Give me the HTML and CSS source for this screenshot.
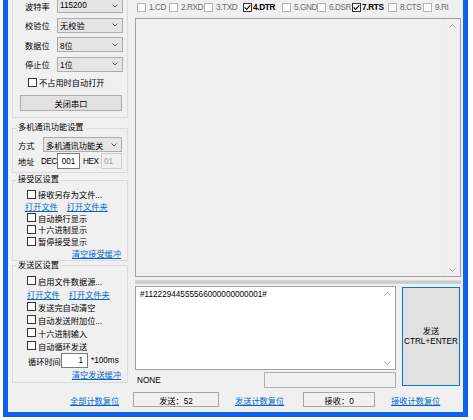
FILE: index.html
```html
<!DOCTYPE html>
<html>
<head>
<meta charset="utf-8">
<title>串口调试</title>
<link rel="stylesheet" href="styles.css">
</head>
<body>
<div class="window">
  <div class="left">
    <div class="grp serial">
      <div class="frow"><span class="flab">波特率</span><div class="combo">115200<svg class="chev" width="6" height="4" viewBox="0 0 6 4"><path d="M0.5 0.5 L3 3 L5.5 0.5"/></svg></div></div>
      <div class="frow"><span class="flab">校验位</span><div class="combo">无校验<svg class="chev" width="6" height="4" viewBox="0 0 6 4"><path d="M0.5 0.5 L3 3 L5.5 0.5"/></svg></div></div>
      <div class="frow"><span class="flab">数据位</span><div class="combo">8位<svg class="chev" width="6" height="4" viewBox="0 0 6 4"><path d="M0.5 0.5 L3 3 L5.5 0.5"/></svg></div></div>
      <div class="frow"><span class="flab">停止位</span><div class="combo">1位<svg class="chev" width="6" height="4" viewBox="0 0 6 4"><path d="M0.5 0.5 L3 3 L5.5 0.5"/></svg></div></div>
      <div class="crow opt"><span class="cb"></span>不占用时自动打开</div>
      <div class="btn close">关闭串口</div>
    </div>

    <fieldset class="grp multi">
      <legend>多机通讯功能设置</legend>
      <div class="mrow"><span class="mlab">方式</span><div class="combo mode">多机通讯功能关<svg class="chev" width="6" height="4" viewBox="0 0 6 4"><path d="M0.5 0.5 L3 3 L5.5 0.5"/></svg></div></div>
      <div class="mrow addr"><span class="alab">地址</span><span class="dec">DEC</span><span class="tbox decin">001</span><span class="hex">HEX</span><span class="tbox hexin">01</span></div>
    </fieldset>

    <fieldset class="grp recv">
      <legend>接受区设置</legend>
      <div class="crow"><span class="cb"></span>接收另存为文件...</div>
      <div class="lrow"><a>打开文件</a><a>打开文件夹</a></div>
      <div class="crow"><span class="cb"></span>自动换行显示</div>
      <div class="crow"><span class="cb"></span>十六进制显示</div>
      <div class="crow"><span class="cb"></span>暂停接受显示</div>
      <div class="rlink"><a>清空接受缓冲</a></div>
    </fieldset>

    <fieldset class="grp send">
      <legend>发送区设置</legend>
      <div class="crow"><span class="cb"></span>启用文件数据源...</div>
      <div class="lrow"><a>打开文件</a><a>打开文件夹</a></div>
      <div class="crow"><span class="cb"></span>发送完自动清空</div>
      <div class="crow"><span class="cb"></span>自动发送附加位...</div>
      <div class="crow"><span class="cb"></span>十六进制输入</div>
      <div class="crow"><span class="cb"></span>自动循环发送</div>
      <div class="looprow"><span class="llab">循环时间</span><span class="tbox loopin">1</span><span class="unit">*100ms</span></div>
      <div class="rlink"><a>清空发送缓冲</a></div>
    </fieldset>

    <div class="resetall"><a>全部计数复位</a></div>
  </div>

  <div class="right">
    <div class="pins">
      <div class="pin off"><span class="cb"></span>1.CD</div>
      <div class="pin off"><span class="cb"></span>2.RXD</div>
      <div class="pin off"><span class="cb"></span>3.TXD</div>
      <div class="pin on"><span class="cb"><svg width="9" height="9" viewBox="0 0 9 9"><path d="M1.6 4.4 L3.6 6.4 L7.4 2.3"/></svg></span>4.DTR</div>
      <div class="pin off"><span class="cb"></span>5.GND</div>
      <div class="pin off"><span class="cb"></span>6.DSR</div>
      <div class="pin on"><span class="cb"><svg width="9" height="9" viewBox="0 0 9 9"><path d="M1.6 4.4 L3.6 6.4 L7.4 2.3"/></svg></span>7.RTS</div>
      <div class="pin off"><span class="cb"></span>8.CTS</div>
      <div class="pin off"><span class="cb"></span>9.RI</div>
    </div>

    <div class="recvbox">
      <div class="vscroll">
        <svg width="7" height="4" viewBox="0 0 7 4"><path d="M0.5 3.5 L3.5 0.5 L6.5 3.5"/></svg>
        <svg width="7" height="4" viewBox="0 0 7 4"><path d="M0.5 0.5 L3.5 3.5 L6.5 0.5"/></svg>
      </div>
    </div>

    <div class="hsplit"></div>

    <div class="sendarea">
      <div class="sendcol">
        <div class="sendbox">
          <div class="sendtext">#11222944555566000000000001#</div>
          <div class="vscroll">
            <svg width="7" height="4" viewBox="0 0 7 4"><path d="M0.5 3.5 L3.5 0.5 L6.5 3.5"/></svg>
            <svg width="7" height="4" viewBox="0 0 7 4"><path d="M0.5 0.5 L3.5 3.5 L6.5 0.5"/></svg>
          </div>
        </div>
        <div class="status"><span>NONE</span><span class="stbox"></span></div>
      </div>
      <div class="sendbtn"><span>发送</span><span>CTRL+ENTER</span></div>
    </div>

    <div class="counts">
      <span class="cbox sent">发送：52</span>
      <a class="clink">发送计数复位</a>
      <span class="cbox recvd">接收：0</span>
      <a class="clink">接收计数复位</a>
    </div>
  </div>
</div>
</body>
</html>
```

FILE: styles.css
```css
* { box-sizing: border-box; }

body {
  margin: 0;
  background: #ffffff;
  font-family: "Liberation Sans", "Noto Sans CJK SC", sans-serif;
  font-size: 8.2px;
  color: #000;
  overflow: hidden;
}

a {
  color: #0066cc;
  text-decoration: underline;
  white-space: nowrap;
}

.window {
  margin-left: 3px;
  width: 465px;
  height: 417px;
  border-left: 5px solid #0a64f0;
  border-right: 5px solid #0a64f0;
  border-bottom: 5px solid #0a64f0;
  background: #f0f0f0;
  display: flex;
  overflow: hidden;
}

/* ---------- left column ---------- */
.left {
  width: 125px;
  flex: none;
  padding-left: 4px;
  display: flex;
  flex-direction: column;
}

.grp {
  width: 116px;
  border: 1px solid #dcdcdc;
  margin: 0;
  min-width: 0;
}

fieldset.grp {
  padding: 0 0 0 3px;
}

legend {
  padding: 0 2px;
  line-height: 10px;
  font-size: 8.2px;
}

.serial {
  border-top: none;
  margin-top: -8px;
  padding-top: 6px;
  padding-bottom: 6px;
}

.frow {
  display: flex;
  align-items: center;
  height: 15px;
  padding-left: 12px;
  margin-bottom: 4.5px;
}

.flab { width: 32px; flex: none; }

.combo {
  width: 66px;
  height: 15px;
  flex: none;
  border: 1px solid #adadad;
  background: #e5e5e5;
  display: flex;
  align-items: center;
  padding-left: 2px;
  white-space: nowrap;
}

.chev {
  margin-left: auto;
  margin-right: 4px;
  flex: none;
}
.chev path { fill: none; stroke: #606060; stroke-width: 1; }

.cb {
  width: 9px;
  height: 9px;
  flex: none;
  border: 1px solid #333333;
  background: #ffffff;
  margin-right: 2px;
  display: inline-flex;
  align-items: center;
  justify-content: center;
}
.cb svg { display: block; margin: -1px; }
.cb path { fill: none; stroke: #000; stroke-width: 1.1; }

.crow {
  display: flex;
  align-items: center;
  height: 11.7px;
  padding-left: 11px;
  white-space: nowrap;
}

.opt {
  height: 12px;
  padding-left: 15px;
}

.btn {
  margin-top: 7px;
  margin-left: 7px;
  width: 102px;
  height: 16px;
  border: 1px solid #adadad;
  background: #e1e1e1;
  display: flex;
  align-items: center;
  justify-content: center;
}

/* multi group */
.multi {
  margin-top: 5px;
  padding-bottom: 3px !important;
}

.mrow {
  display: flex;
  align-items: center;
  height: 15px;
  padding-left: 2px;
  margin-top: 4px;
  white-space: nowrap;
}
.mrow.addr { height: 16px; margin-top: 1px; }

.mlab { width: 25px; flex: none; }
.combo.mode { width: 79px; }

.alab { width: 23px; flex: none; }
.dec { width: 16px; flex: none; letter-spacing: -0.45px; }
.hex { width: 18px; margin-left: 3px; flex: none; letter-spacing: -0.45px; }

.tbox {
  height: 16px;
  border: 1px solid #7a7a7a;
  background: #ffffff;
  display: flex;
  align-items: center;
  flex: none;
}
.decin { width: 23px; justify-content: center; }
.hexin {
  width: 21px;
  border-color: #cccccc;
  background: #f0f0f0;
  color: #9a9a9a;
  padding-left: 2px;
}

/* receive group */
.recv {
  margin-top: 2px;
  padding-bottom: 1px !important;
}
.recv > .crow:first-of-type { margin-top: 3.5px; }

.lrow {
  display: flex;
  align-items: center;
  height: 11.7px;
  padding-left: 9px;
  gap: 9px;
}

.rlink {
  height: 11.7px;
  display: flex;
  align-items: center;
  justify-content: flex-end;
  padding-right: 6px;
}

/* send group */
.send {
  padding-bottom: 2px !important;
}
.send > .crow,
.send > .lrow { height: 13px; }
.send > .crow:first-of-type { margin-top: 3.8px; }
.send > .lrow { padding-left: 11px; }
.send > .rlink { height: 12px; }

.looprow {
  display: flex;
  align-items: center;
  height: 15px;
  margin-top: 1px;
  padding-left: 12px;
  white-space: nowrap;
}
.llab { width: 33px; flex: none; }
.loopin {
  width: 27px;
  height: 15px;
  justify-content: flex-end;
  padding-right: 4px;
}
.unit { margin-left: 3px; }

.resetall {
  margin-top: 10.5px;
  height: 12px;
  display: flex;
  align-items: center;
  padding-left: 58px;
}

/* ---------- right column ---------- */
.right {
  width: 330px;
  flex: none;
  padding-right: 2px;
  display: flex;
  flex-direction: column;
}

.pins {
  height: 18px;
  padding-left: 4px;
  padding-top: 2px;
  display: grid;
  grid-template-columns: 32px 35px 39px 39px 35px 35px 36px 35px auto;
  align-items: start;
}

.pin {
  display: flex;
  align-items: center;
  height: 10px;
  white-space: nowrap;
  letter-spacing: -0.4px;
}
.pin.off { color: #6d6d6d; }
.pin.off .cb { border-color: #b4b4b4; margin-right: 3px; }
.pin.on { font-weight: bold; letter-spacing: -0.3px; }
.pin.on .cb { margin-right: 1px; }

.recvbox {
  margin-left: 2px;
  height: 259px;
  border: 1px solid #a0a0a0;
  background: #f0f0f0;
  display: flex;
  justify-content: flex-end;
}

.vscroll {
  width: 16px;
  flex: none;
  display: flex;
  flex-direction: column;
  justify-content: space-between;
  align-items: center;
  padding: 5px 0 4px;
}
.vscroll path { fill: none; stroke: #a6a6a6; stroke-width: 1; }
.recvbox .vscroll { border-left: 1px solid #e9e9e9; }

.hsplit {
  margin: 3px 0 0 2px;
  height: 4px;
  background: #cdcdcd;
  border-top: 1px solid #dadada;
}

.sendarea {
  display: flex;
  gap: 6px;
  margin: 2px 0 0 2px;
}

.sendcol {
  width: 261px;
  flex: none;
}

.sendbox {
  height: 84px;
  border: 1px solid #a0a0a0;
  background: #ffffff;
  display: flex;
}
.sendtext {
  flex: 1;
  padding: 3px 0 0 4px;
  line-height: 10px;
}

.status {
  margin-top: 2px;
  height: 16px;
  display: flex;
  align-items: center;
  justify-content: space-between;
  padding-left: 2px;
}
.stbox {
  width: 132px;
  height: 16px;
  border: 1px solid #b0b0b0;
  background: #f0f0f0;
}

.sendbtn {
  width: 58px;
  height: 99px;
  margin-top: 1px;
  flex: none;
  border: 1px solid #0078d7;
  background: #e1e1e1;
  display: flex;
  flex-direction: column;
  align-items: center;
  justify-content: center;
  line-height: 9.5px;
  white-space: nowrap;
}

.counts {
  margin-top: 4px;
  height: 15px;
  display: flex;
  align-items: center;
}

.cbox {
  height: 15px;
  border: 1px solid #a5a5a5;
  background: #f0f0f0;
  display: flex;
  align-items: center;
  justify-content: center;
  flex: none;
}
.cbox.sent { width: 86px; }
.cbox.recvd { width: 72px; margin-left: 19px; }
.clink { margin-left: 16px; }
```
